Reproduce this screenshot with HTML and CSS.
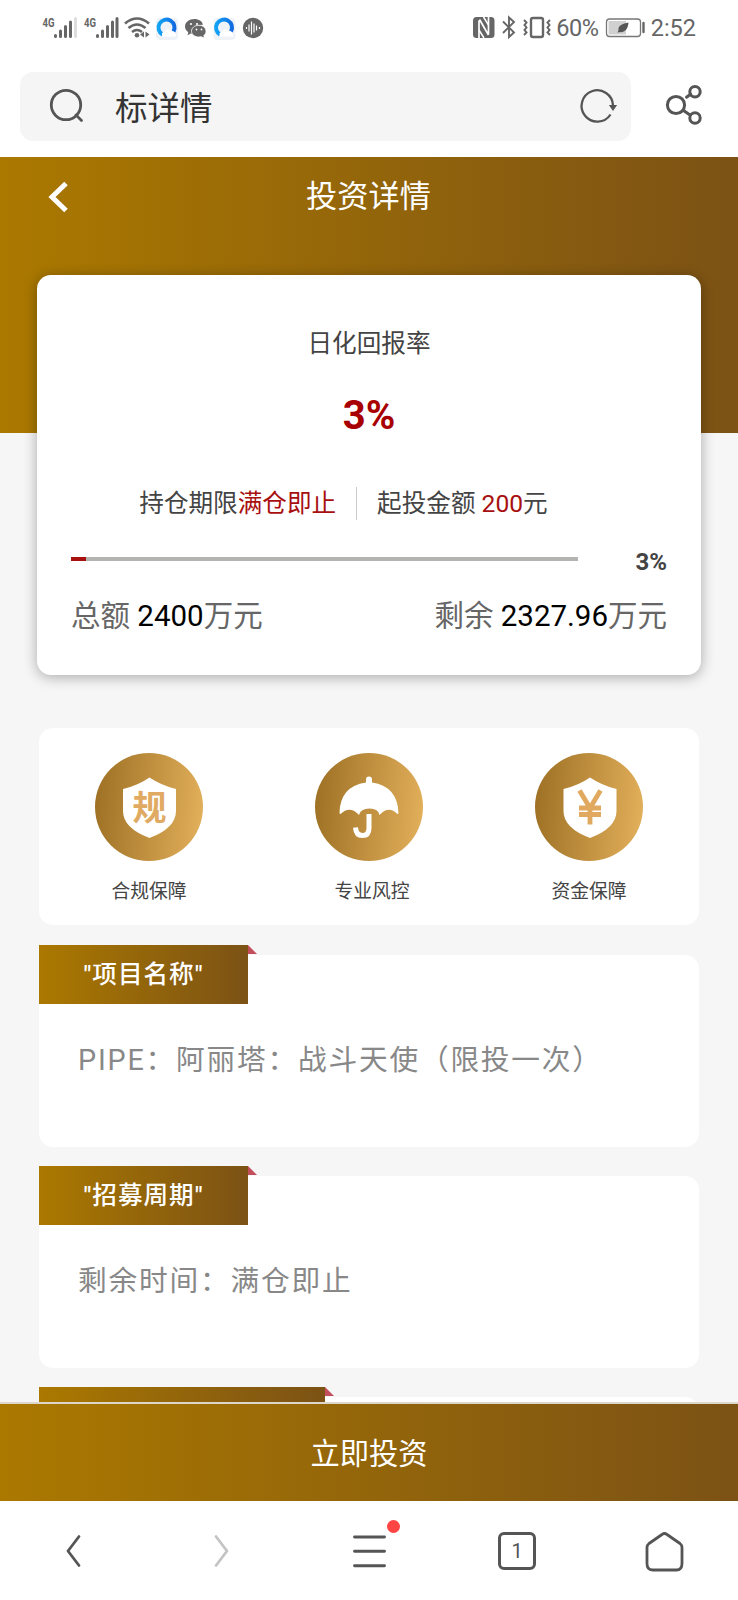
FILE: index.html
```html
<!DOCTYPE html>
<html lang="zh-CN">
<head>
<meta charset="utf-8">
<title>标详情</title>
<link rel="stylesheet" href="styles.css">
</head>
<body>
<div class="phone">
  <header class="status">
    <svg class="status-left" width="230" height="32" viewBox="40 12 230 32">
      <g class="net"><text x="42.500" y="26.500" textLength="12" lengthAdjust="spacingAndGlyphs">4G</text><text x="84" y="26.500" textLength="12" lengthAdjust="spacingAndGlyphs">4G</text></g>
      <g stroke="#666" stroke-width="3" stroke-linecap="round">
        <path d="M55.5 35.5v1M60.5 31v5.500M65.500 26.500v10M70.500 22v14.500"/>
        <path d="M75.500 18.500v18" stroke="#ddd"/>
        <path d="M97.500 35.500v1M102.500 31v5.500M107.500 26.500v10M112.500 22v14.500M117 18.500v18"/>
      </g>
      <g fill="none" stroke="#666" stroke-width="2.600">
        <path d="M125 23.500q12-10 24 0M128.500 28q8.500-7 17 0M132 32q5-4 10 0"/>
      </g>
      <circle cx="137" cy="35.300" r="2.300" fill="#666"/>
      <path d="M140 34.500l4-3v6zM149.500 34.500l-4-3v6z" fill="#666"/>
      <g id="q">
        <rect x="156" y="18" width="22" height="22" rx="4" fill="#eff3f8"/>
        <path d="M162.500 34.500a8 8 0 1 1 11-3" fill="none" stroke="url(#blue)" stroke-width="4"/>
        <path d="M163 36.500q-3-4 2-5q3-4 6-.5q5 0 5 5.500z" fill="#fff"/>
      </g>
      <use href="#q" x="57.500"/>
      <path d="M194.500 19c-5.500 0-9.500 3.300-9.500 7.500 0 2.300 1.300 4.400 3.300 5.800l-.8 3 3.300-1.800 2.200.4c-1-6 3.500-9.400 10-9.200-.8-3.500-4.300-5.700-8.500-5.700z" fill="#666"/>
      <path d="M199 25.300c-4.600 0-7.500 2.700-7.500 5.900s3 5.800 7.500 5.800l2-.3 3.500 1.300-.7-2.500c1.500-1 2.200-2.600 2.200-4.300 0-3.200-2.900-5.900-7-5.900z" fill="#666" stroke="#fff" stroke-width=".8"/>
      <g fill="#fff"><circle cx="191" cy="24" r="1.100"/><circle cx="197" cy="24" r="1.100"/><circle cx="196.500" cy="29.500" r=".9"/><circle cx="201.500" cy="29.500" r=".9"/></g>
      <circle cx="253" cy="28" r="10.200" fill="#666"/>
      <path d="M246.500 27v2M249 24.500v7M251.500 21.500v13M254 23.500v9M256.500 25.500v5M259.500 27v2" stroke="#fff" stroke-width="1.200"/>
      <defs><linearGradient id="blue"><stop stop-color="#12a3f4"/><stop offset="1" stop-color="#126ce0"/></linearGradient></defs>
    </svg>
    <div class="status-right">
      <svg width="80" height="24" viewBox="474 16 80 24">
        <rect x="475" y="17" width="21.500" height="21" rx="3.500" fill="#666"/>
        <path d="M481 38.500V20.500M481.500 19.500L490.500 35M490.500 34.500V16.500" fill="none" stroke="#fff" stroke-width="1.700"/>
        <path d="M485.500 17l5 8M481 30l5 8" fill="none" stroke="#fff" stroke-width="1.500"/>
        <path d="M505 21.500l11 11-5 4.500V17.500l5 4.500-11 11" fill="none" stroke="#666" stroke-width="1.900"/>
        <rect x="533" y="18" width="12" height="19" rx="2" fill="none" stroke="#666" stroke-width="2.400"/>
        <path d="M526 20l2.500 2.500-2 2.500 2 2.500-2 2.500 2 2.500-2.500 2.500M552 20l-2.500 2.500 2 2.500-2 2.500 2 2.500-2 2.500 2.500 2.500" fill="none" stroke="#666" stroke-width="2"/>
      </svg>
      <span class="pct">60%</span>
      <svg class="battery" width="40" height="20" viewBox="605 18 40 20">
        <rect x="606.500" y="19" width="34" height="17.500" rx="3" fill="#fff" stroke="#777" stroke-width="1.300"/>
        <rect x="608.500" y="21" width="17.500" height="13.500" fill="#d0d0d0"/>
        <path d="M628.500 22.500c-6 1-10.500 3-10 7.500l-1 3 1.500-1c5 1 9-2 9.500-9.500z" fill="#555"/>
        <path d="M643.500 23v9" stroke="#666" stroke-width="2.400" stroke-linecap="round"/>
      </svg>
      <span class="time">2:52</span>
    </div>
  </header>

  <div class="address">
    <div class="field">
      <svg width="36" height="36" viewBox="0 0 36 36" fill="none" stroke="#555" stroke-width="2.800" stroke-linecap="round"><circle cx="17" cy="17" r="14.700"/><path d="M27 27l5.500 5.500"/></svg>
      <span class="field-text">标详情</span>
      <svg width="38" height="36" viewBox="0 0 38 36" fill="none" stroke="#555" stroke-width="2.300"><path d="M31.500 26.500A15.700 15.700 0 1 1 34 17.500"/><path d="M31 17.500h6l-3 4.500z" fill="#555" stroke-width="1.200"/></svg>
    </div>
    <svg class="share" width="38" height="42" viewBox="0 0 38 42" fill="none" stroke="#555" stroke-width="3" stroke-linecap="round"><circle cx="11" cy="21" r="8.600"/><circle cx="30" cy="7.800" r="5.200"/><circle cx="30" cy="34" r="5.200"/><path d="M21.500 13.200l4-3M18.500 26.500l6.500 4.500"/></svg>
  </div>

  <main class="page">
    <div class="hero">
      <svg width="22" height="32" viewBox="0 0 22 32" fill="none" stroke="#fff" stroke-width="5"><path d="M18 2.500L4 16l14 13.500"/></svg>
      <h1>投资详情</h1>
    </div>
    <section class="rate-card">
      <h2>日化回报率</h2>
      <strong class="rate">3%</strong>
      <div class="terms">
        <span>持仓期限<em>满仓即止</em></span>
        <span class="amount">起投金额 <em>200</em>元</span>
      </div>
      <div class="progress">
        <div class="track"><div class="bar" style="width:3%"></div></div>
        <b>3%</b>
      </div>
      <div class="totals">
        <span>总额 <i>2400</i>万元</span>
        <span>剩余 <i>2327.96</i>万元</span>
      </div>
    </section>

    <section class="services">
      <div class="service">
        <div class="disc"><svg viewBox="0 0 108 108"><path d="M54.500 24.500q12 8 26.500 11.500v22q0 17-26.500 27-26.500-10-26.500-27v-22q15-3.500 26.500-11.500z" fill="#fff"/><text class="gui" x="54.500" y="66.500">规</text></svg></div>
        <span>合规保障</span>
      </div>
      <div class="service">
        <div class="disc"><svg viewBox="0 0 108 108"><path d="M24.500 60.500q0-27 26.500-31v-3a3 3 0 0 1 6 0v3q26 4 26.500 31l-1 .5q-9-9-18 1-1-6.500-10-6.500t-10.500 6.500q-9-10-18.500-1z" fill="#fff"/><path d="M54 61v14q0 7.500-6.500 7.500t-7-8" fill="none" stroke="#fff" stroke-width="5"/></svg></div>
        <span class="nudge">专业风控</span>
      </div>
      <div class="service">
        <div class="disc"><svg viewBox="0 0 108 108"><path d="M55 24.500q12 8 26.500 11.500v22q0 17-26.500 27-26.500-10-26.500-27v-22q15-3.500 26.500-11.500z" fill="#fff"/><path d="M44.500 37.500l10.500 17.500 10.500-17.500M44 55h22M44 61.500h22M55 54v17.500" fill="none" stroke="#e0a95f" stroke-width="4.800"/></svg></div>
        <span>资金保障</span>
      </div>
    </section>

    <section class="info"><h3>"项目名称"</h3><div class="panel">PIPE：阿丽塔：战斗天使（限投一次）</div></section>
    <section class="info"><h3>"招募周期"</h3><div class="panel">剩余时间：满仓即止</div></section>
    <section class="info last"><h3></h3><div class="panel"></div></section>
  </main>

  <button class="invest">立即投资</button>
  <nav class="nav">
    <svg viewBox="0 0 40 40" fill="none" stroke="#555" stroke-width="2.800" stroke-linecap="round" stroke-linejoin="round"><path d="M25 5.500l-11 14.500 11 14.500"/></svg>
    <svg viewBox="0 0 40 40" fill="none" stroke="#c4c4c4" stroke-width="2.800" stroke-linecap="round" stroke-linejoin="round"><path d="M14 5.500l11 14.500-11 14.500"/></svg>
    <div class="menu"><svg viewBox="0 0 40 40" fill="none" stroke="#555" stroke-width="2.900" stroke-linecap="round"><path d="M4.500 6h30M4.500 20.300h30M4.500 34.700h30"/></svg><span class="dot"></span></div>
    <div class="tabs">1</div>
    <svg viewBox="0 0 40 40" fill="none" stroke="#555" stroke-width="2.800" stroke-linejoin="round"><path d="M18 3.500q2.500-2 5 0l13 9q2 1.500 2 4v16q0 6.500-5.500 6.500h-24q-5.500 0-5.500-6.500v-16q0-2.500 2-4z"/></svg>
  </nav>
</div>
</body>
</html>
```
FILE: styles.css
```css
* { box-sizing: border-box; }
body { margin: 0; font-family: Roboto, "Noto Sans CJK SC", sans-serif; background: #fff; }
svg { display: block; flex: none; overflow: visible; }
h1, h2, h3 { margin: 0; font-weight: 400; }
em, i { font-style: normal; }

.phone { width: 738px; height: 1600px; display: flex; flex-direction: column; overflow: hidden; }

.status { height: 56px; flex: none; display: flex; justify-content: space-between; padding: 12px 42px 0 40px; }
.net { font: 700 13.5px Roboto, sans-serif; fill: #666; }
.status-right { display: flex; align-items: center; height: 32px; color: #666; font-size: 23.5px; }
.pct { margin-left: 4px; letter-spacing: -.4px; }
.battery { margin: 0 6px 0 6px; }

.address { height: 101px; flex: none; display: flex; align-items: flex-start; padding: 16px 35px 0 20px; gap: 34px; }
.field { width: 611px; height: 69px; border-radius: 13px; background: #f5f5f5; display: flex; align-items: center; padding: 0 14px 2px 29px; }
.field-text { flex: 1; margin-left: 30px; font-size: 32.500px; color: #333; }
.share { margin-top: 12px; }

.page { height: 1245px; flex: none; overflow: hidden; background: #f6f6f6; display: flex; flex-direction: column; }
.hero { height: 276px; flex: none; background: linear-gradient(90deg, #ab7900, #7c5215); display: flex; align-items: flex-start; padding: 24px 48px 0; }
.hero h1 { flex: 1; padding-right: 23px; text-align: center; font-size: 31.200px; line-height: 32px; color: #fff; }

.rate-card { height: 400px; flex: none; margin: -158px 37px 0; padding: 0 34px; border-radius: 14px; background: #fff; box-shadow: 0 2px 14px rgba(0,0,0,.32); display: flex; flex-direction: column; align-items: center; position: relative; color: #444; }
.rate-card h2 { margin-top: 51px; font-size: 24.600px; line-height: 36px; }
.rate { margin-top: 30px; font-size: 40px; line-height: 48px; color: #a80000; }
.terms { margin-top: 47px; display: flex; height: 33px; line-height: 33px; font-size: 24.600px; margin-right: 51px; }
.terms em { color: #a80f0f; }
.amount { margin-left: 20px; padding-left: 20px; border-left: 1px solid #ccc; }
.progress { align-self: stretch; margin-top: 26px; height: 32px; display: flex; justify-content: space-between; align-items: center; }
.track { width: 507px; height: 4px; margin-bottom: 6px; background: #b3b3b0; }
.bar { height: 4px; background: #a80f0f; }
.progress b { font-size: 24px; line-height: 32px; }
.totals { align-self: stretch; margin-top: 13px; display: flex; justify-content: space-between; font-size: 29.500px; line-height: 50px; color: #666; }
.totals i { color: #000; }

.services { height: 197px; flex: none; margin: 53px 39px 0; border-radius: 14px; background: #fff; display: flex; justify-content: space-between; padding: 25px 56px 0; }
.service { width: 108px; display: flex; flex-direction: column; align-items: center; font-size: 18.800px; color: #444; white-space: nowrap; }
.service span { margin-top: 17px; line-height: 28px; }
.service .nudge { transform: translateX(3px); }
.disc { width: 108px; height: 108px; border-radius: 50%; background: linear-gradient(95deg, #9c6f23, #e4b15c); }
.gui { font: 700 34px "Noto Sans CJK SC", sans-serif; fill: #e0aa62; text-anchor: middle; }

.info { margin: 20px 39px 0; height: 201px; flex: none; display: flex; flex-direction: column; align-items: flex-start; }
.info h3 { position: relative; width: 209px; height: 59px; flex: none; background: linear-gradient(90deg, #ab7900, #7c5215); color: #fff; font-size: 24.600px; font-weight: 500; letter-spacing: 1px; line-height: 60px; text-align: center; }
.info h3::after { content: ""; position: absolute; left: 100%; top: 0; border-left: 9px solid #c44f5c; border-top: 9px solid transparent; }
.panel { width: 660px; height: 192px; flex: none; margin-top: -49px; padding: 80px 40px 0 39px; border-radius: 14px; background: #fff; font-size: 28.700px; line-height: 50px; letter-spacing: 1.800px; color: #888; white-space: nowrap; }
.last h3 { width: 286px; }

.invest { height: 99px; flex: none; border: 0; border-top: 2px solid #ddd6ca; padding: 0 0 3px; background: linear-gradient(90deg, #ab7900, #7c5215) padding-box; color: #fff; font: 400 29.3px "Noto Sans CJK SC", sans-serif; }
.nav { height: 99px; flex: none; display: flex; justify-content: space-between; align-items: center; padding: 0 54px; background: #fff; }
.nav svg { width: 40px; height: 40px; }
.menu { position: relative; }
.dot { position: absolute; width: 13px; height: 13px; border-radius: 50%; background: #ff4444; left: 37px; top: -11px; }
.tabs { width: 38px; height: 38px; border: 3px solid #555; border-radius: 6px; font-size: 20px; line-height: 32px; text-align: center; color: #555; }
```
